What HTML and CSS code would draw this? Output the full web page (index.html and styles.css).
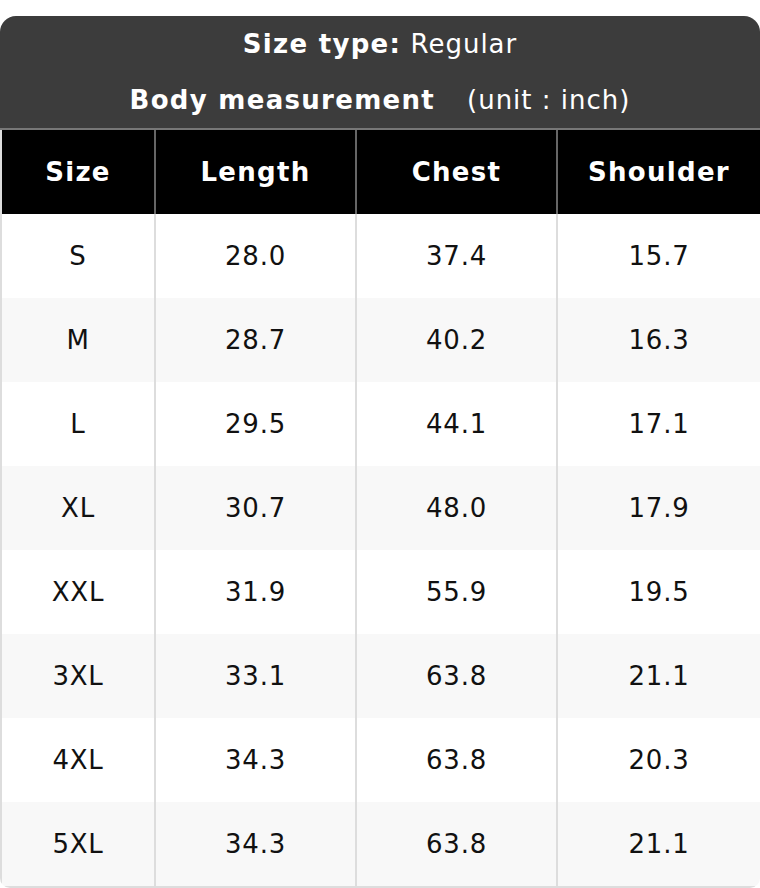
FILE: index.html
```html
<!DOCTYPE html>
<html>
<head>
<meta charset="utf-8">
<link rel="stylesheet" href="styles.css">
</head>
<body>
<div class="chart">
  <div class="caption">
    <div class="line"><b>Size type:</b> Regular</div>
    <div class="line"><b>Body measurement</b><span class="unit">(unit : inch)</span></div>
  </div>
  <table class="sizes">
    <colgroup><col class="c1"><col class="c2"><col class="c3"><col class="c4"></colgroup>
    <thead>
      <tr><th>Size</th><th>Length</th><th>Chest</th><th>Shoulder</th></tr>
    </thead>
    <tbody>
      <tr><td>S</td><td>28.0</td><td>37.4</td><td>15.7</td></tr>
      <tr><td>M</td><td>28.7</td><td>40.2</td><td>16.3</td></tr>
      <tr><td>L</td><td>29.5</td><td>44.1</td><td>17.1</td></tr>
      <tr><td>XL</td><td>30.7</td><td>48.0</td><td>17.9</td></tr>
      <tr><td>XXL</td><td>31.9</td><td>55.9</td><td>19.5</td></tr>
      <tr><td>3XL</td><td>33.1</td><td>63.8</td><td>21.1</td></tr>
      <tr><td>4XL</td><td>34.3</td><td>63.8</td><td>20.3</td></tr>
      <tr><td>5XL</td><td>34.3</td><td>63.8</td><td>21.1</td></tr>
    </tbody>
  </table>
</div>
</body>
</html>
```
FILE: styles.css
```css
html, body {
  margin: 0;
  padding: 0;
  background: #ffffff;
}
body {
  padding-top: 16px;
  font-family: "DejaVu Sans", "Liberation Sans", sans-serif;
}
.chart {
  width: 760px;
  border-radius: 16px 16px 10px 10px;
  overflow: hidden;
  background: #ffffff;
}
.caption {
  background: #3c3c3c;
  color: #ffffff;
  text-align: center;
  font-size: 26px;
  letter-spacing: 1px;
  border-bottom: 2px solid #777777;
}
.caption b {
  letter-spacing: 1.3px;
}
.line {
  height: 56px;
  line-height: 56px;
}
.unit {
  margin-left: 32px;
}
.sizes {
  width: 760px;
  border-collapse: collapse;
  table-layout: fixed;
}
.c1 { width: 154px; }
.c2 { width: 201px; }
.c3 { width: 201px; }
.c4 { width: 204px; }
.sizes th, .sizes td {
  padding: 0;
  text-align: center;
  height: 84px;
  font-size: 26px;
}
.sizes th {
  background: #000000;
  color: #ffffff;
  font-weight: bold;
  letter-spacing: 1.3px;
  border-left: 2px solid #666666;
}
.sizes td {
  color: #111111;
  letter-spacing: 0.8px;
  border-left: 2px solid #dddddd;
}
.sizes th:first-child, .sizes td:first-child {
  border-left: 2px solid #dddddd;
}
.sizes th:last-child, .sizes td:last-child {
  border-right: 2px solid #dddddd;
}
.sizes tbody tr:nth-child(even) td {
  background: #f8f8f8;
}
.sizes tbody tr:last-child td {
  border-bottom: 2px solid #dddddd;
}
```
